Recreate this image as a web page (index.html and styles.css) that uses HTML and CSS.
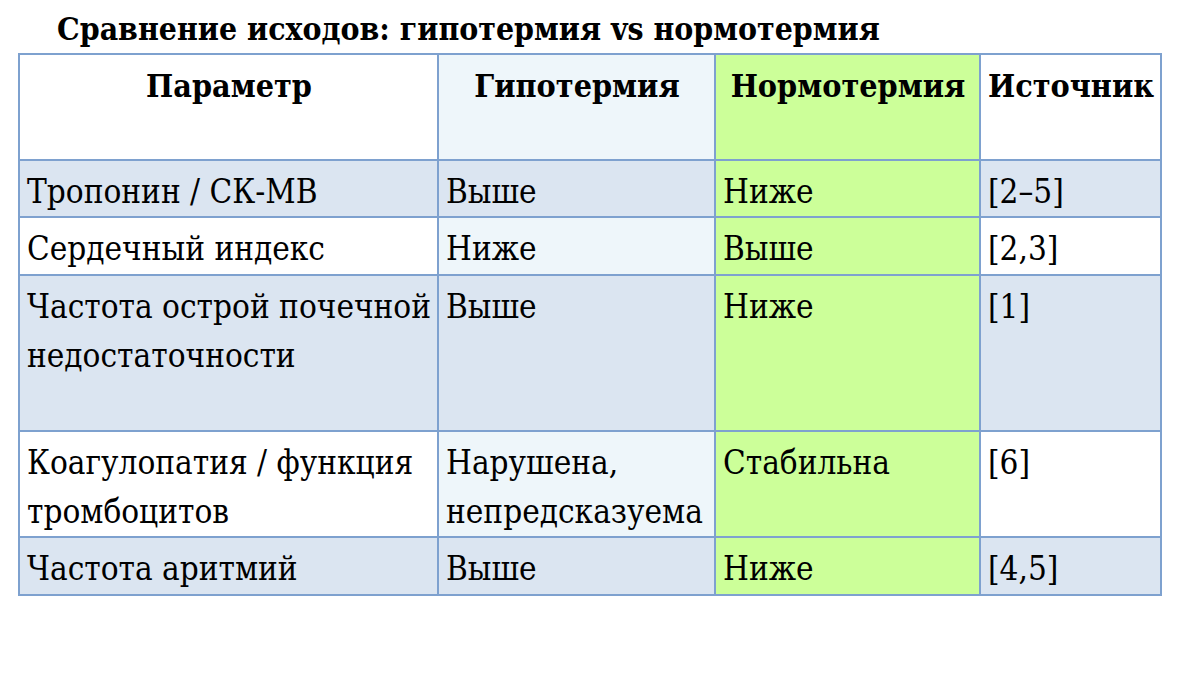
FILE: index.html
```html
<!DOCTYPE html>
<html lang="ru">
<head>
<meta charset="utf-8">
<link rel="stylesheet" href="styles.css">
</head>
<body>
<h1 class="title">Сравнение исходов: гипотермия vs нормотермия</h1>
<table class="cmp">
  <colgroup>
    <col class="c1"><col class="c2"><col class="c3"><col class="c4">
  </colgroup>
  <tr class="head">
    <th class="center">Параметр</th>
    <th class="center hypo">Гипотермия</th>
    <th class="center norm">Нормотермия</th>
    <th>Источник</th>
  </tr>
  <tr class="band r1">
    <td>Тропонин / СК-МВ</td><td class="hypo">Выше</td><td class="norm">Ниже</td><td>[2–5]</td>
  </tr>
  <tr class="plain r2">
    <td>Сердечный индекс</td><td class="hypo">Ниже</td><td class="norm">Выше</td><td>[2,3]</td>
  </tr>
  <tr class="band r3">
    <td>Частота острой почечной недостаточности</td><td class="hypo">Выше</td><td class="norm">Ниже</td><td>[1]</td>
  </tr>
  <tr class="plain r4">
    <td>Коагулопатия / функция тромбоцитов</td><td class="hypo">Нарушена, непредсказуема</td><td class="norm">Стабильна</td><td>[6]</td>
  </tr>
  <tr class="band r5">
    <td>Частота аритмий</td><td class="hypo">Выше</td><td class="norm">Ниже</td><td>[4,5]</td>
  </tr>
</table>
</body>
</html>
```
FILE: styles.css
```css
html, body {
  margin: 0;
  padding: 0;
  background: #ffffff;
}
body {
  width: 1200px;
  height: 675px;
  overflow: hidden;
  font-family: "DejaVu Serif Condensed", "DejaVu Serif", serif;
  font-stretch: condensed;
  color: #000;
}
.title {
  margin: 0;
  padding: 10px 0 0 57px;
  height: 53px;
  box-sizing: border-box;
  font-size: 31.7px;
  line-height: 38px;
  font-weight: bold;
  white-space: nowrap;
}
.cmp {
  margin-left: 18px;
  border-collapse: collapse;
  table-layout: fixed;
  width: 1142px;
}
.c1 { width: 419px; }
.c2 { width: 277px; }
.c3 { width: 265px; }
.c4 { width: 181px; }
.cmp th, .cmp td {
  border: 2px solid #7ea1cf;
  padding: 6px 6px 0 7px;
  vertical-align: top;
  text-align: left;
  font-size: 33px;
  line-height: 49px;
  box-sizing: border-box;
}
.cmp th {
  font-weight: bold;
  font-size: 32px;
  padding-top: 7px;
  white-space: nowrap;
}
.cmp th.center { text-align: center; }
.head { height: 106px; }
.r1 { height: 57px; }
.r2 { height: 58px; }
.r3 { height: 156px; }
.r4 { height: 106px; }
.r5 { height: 58px; }
.head th { background: #ffffff; }
.head th.hypo { background: #eef6fa; }
.band td { background: #dbe5f1; }
.plain td { background: #ffffff; }
.plain td.hypo { background: #eef6fa; }
.cmp .norm { background: #ccff99; }
```
